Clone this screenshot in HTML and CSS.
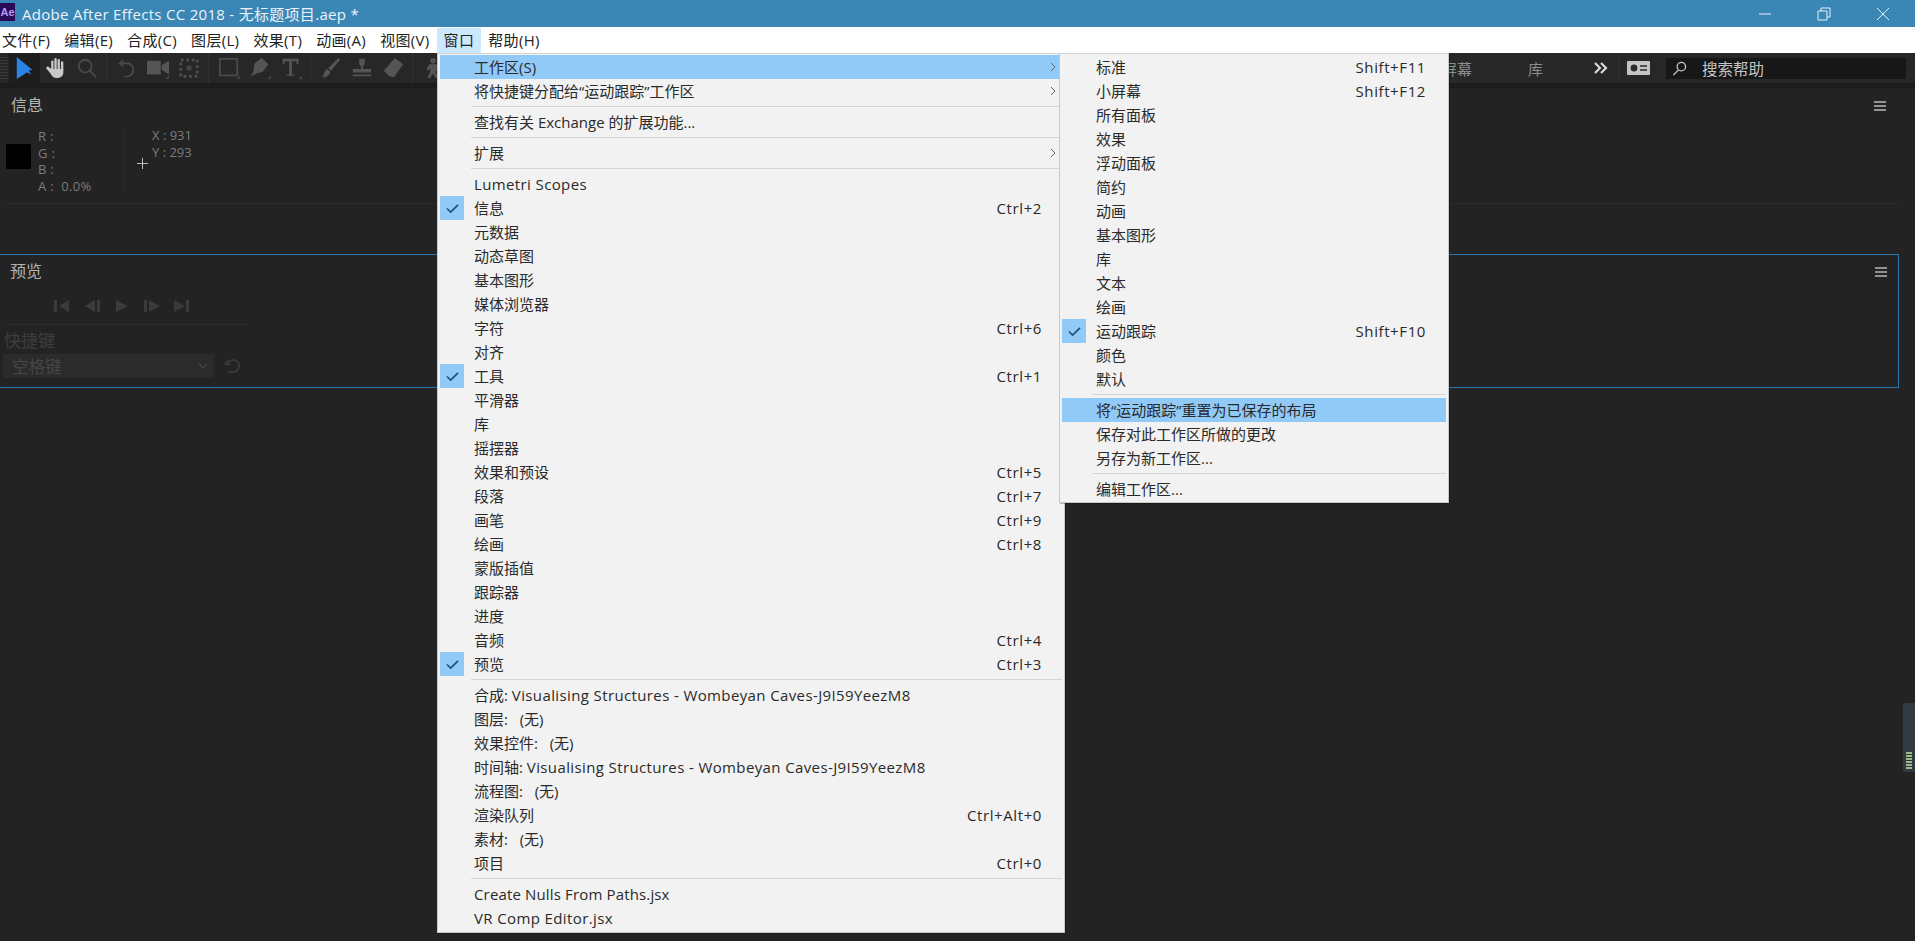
FILE: index.html
```html
<!DOCTYPE html>
<html lang="zh-CN">
<head>
<meta charset="utf-8">
<title>Adobe After Effects CC 2018</title>
<link rel="stylesheet" href="styles.css">
</head>
<body>
<header class="titlebar">
  <span class="ae-logo">Ae</span>
  <span class="title-text">Adobe After Effects CC 2018 - 无标题项目.aep *</span>
  <div class="win-controls">
    <svg class="win-btn" viewBox="0 0 16 16"><path d="M2 8h12"/></svg>
    <svg class="win-btn" viewBox="0 0 16 16"><path d="M2 5h9v9H2zM5 5V2h9v9h-3"/></svg>
    <svg class="win-btn" viewBox="0 0 16 16"><path d="M2 2l12 12M14 2L2 14"/></svg>
  </div>
</header>
<nav class="menubar">
  <span class="mb-item mb-first">文件(F)</span>
  <span class="mb-item">编辑(E)</span>
  <span class="mb-item">合成(C)</span>
  <span class="mb-item">图层(L)</span>
  <span class="mb-item">效果(T)</span>
  <span class="mb-item">动画(A)</span>
  <span class="mb-item">视图(V)</span>
  <span class="mb-item mb-open">窗口</span>
  <span class="mb-item">帮助(H)</span>
</nav>
<div class="toolbar">
  <div class="grip"></div>
  <span class="tool tool-active"><svg viewBox="0 0 24 24" class="ico"><path class="f-blue" d="M3 0l17 14-4 1 3 4-5-2-11 7z"/></svg></span>
  <span class="tool"><svg viewBox="0 0 24 24" class="ico"><path class="f-light" d="M7 13h13v4c0 3-2 6-7 6-4 0-5-2-7-5l-5-6 2-2 4 3z"/><path class="s-light" d="M8 14V5M11.5 13V2.5M15 13V3.5M18.7 14V6"/></svg></span>
  <span class="tool"><svg viewBox="0 0 24 24" class="ico"><circle class="s-dim" cx="10" cy="10" r="7"/><path class="s-dim" d="M15 15l7 7"/></svg></span>
  <i class="tsep"></i>
  <span class="tool"><svg viewBox="0 0 24 24" class="ico"><path class="s-dim" d="M5 7h9a7 7 0 1 1-5 14"/><path class="f-dim" d="M2 7l6-5v10z"/></svg></span>
  <span class="tool"><svg viewBox="0 0 24 24" class="ico"><path class="f-mid" d="M0 4h15v15H0zM16 9l8-5v15l-8-5z"/><path class="f-dim" d="M24 24h-4l4-4z"/></svg></span>
  <span class="tool"><svg viewBox="0 0 24 24" class="ico"><path class="s-dots" d="M3 3h18v18H3z"/><circle class="f-dim" cx="12" cy="12" r="3"/></svg></span>
  <i class="tsep"></i>
  <span class="tool"><svg viewBox="0 0 24 24" class="ico"><path class="s-dim" d="M2 2h19v18H2z"/><path class="f-dim" d="M24 24h-4l4-4z"/></svg></span>
  <span class="tool"><svg viewBox="0 0 24 24" class="ico"><path class="f-mid" d="M14 1l7 7-6 8-7 2-6 3 3-6 1-8z"/><path class="f-dim" d="M24 24h-4l4-4z"/></svg></span>
  <span class="tool"><svg viewBox="0 0 24 24" class="ico"><path class="f-mid" d="M3 2h17v6h-1.500l-1-3.500H13V19h3v1.500H7V19h3V4.500H5.500L4.500 8H3z"/><path class="f-dim" d="M24 24h-4l4-4z"/></svg></span>
  <i class="tsep"></i>
  <span class="tool"><svg viewBox="0 0 24 24" class="ico"><path class="f-mid" d="M20 1l2 2-10 12-3-3zM8 13l3 3c0 4-4 6-9 6 3-2 2-8 6-9z"/></svg></span>
  <span class="tool"><svg viewBox="0 0 24 24" class="ico"><path class="f-mid" d="M9 2h6v6l-2 2v3h9v4H2v-4h9v-3L9 8zM2 19h20v2H2z"/></svg></span>
  <span class="tool"><svg viewBox="0 0 24 24" class="ico"><path class="f-mid" d="M14 1l9 7-10 14-5-1-6-6z"/></svg></span>
  <i class="tsep"></i>
  <span class="tool"><svg viewBox="0 0 24 24" class="ico"><circle class="f-mid" cx="12" cy="4" r="3"/><path class="f-mid" d="M8 8h8l3 7-3 1-1-3v4l3 6h-3l-3-5-3 5H6l3-7v-4l-2 3-2-2z"/></svg></span>
  <div class="tool-right">
    <span class="ws">小屏幕</span>
    <span class="ws">库</span>
    <svg class="more" viewBox="0 0 14 12"><path d="M1 1l5 5-5 5M7 1l5 5-5 5"/></svg>
    <i class="tsep tsep-r"></i>
    <svg class="sync" viewBox="0 0 23 14"><rect width="23" height="14" rx="1"/><circle cx="7" cy="7" r="3.400"/><path d="M13 5h7M13 9h7"/></svg>
    <div class="search">
      <svg class="search-ico" viewBox="0 0 16 16"><circle cx="10" cy="6" r="4.500"/><path d="M7 9.500L1.500 15"/></svg>
      <span>搜索帮助</span>
    </div>
  </div>
</div>

<main class="work">
  <section class="panel-info">
    <div class="panel-head">
      <span class="panel-title">信息</span>
      <svg class="burger" viewBox="0 0 12 10"><path d="M0 1h12M0 5h12M0 9h12"/></svg>
    </div>
    <div class="info-body">
      <div class="swatch"></div>
      <div class="rgba">
        <div>R :</div>
        <div>G :</div>
        <div>B :</div>
        <div>A :&nbsp; 0.0%</div>
      </div>
      <i class="info-vline"></i>
      <svg class="plus" viewBox="0 0 12 12"><path d="M6 0v12M0 6h12"/></svg>
      <div class="xy">
        <div>X : 931</div>
        <div>Y : 293</div>
      </div>
    </div>
    <div class="info-rule"></div>
  </section>
  <section class="panel-preview">
    <div class="panel-head preview-head">
      <span class="panel-title">预览</span>
      <svg class="burger" viewBox="0 0 12 10"><path d="M0 1h12M0 5h12M0 9h12"/></svg>
    </div>
    <div class="transport">
      <svg viewBox="0 0 16 14"><path d="M0 1h3v12H0zM15 1v12L5 7z"/></svg>
      <svg viewBox="0 0 16 14"><path d="M11 1v12L1 7zM13 1h3v12h-3z"/></svg>
      <svg viewBox="0 0 16 14"><path d="M2 1l12 6-12 6z"/></svg>
      <svg viewBox="0 0 16 14"><path d="M0 1h3v12H0zM5 1l11 6-11 6z"/></svg>
      <svg viewBox="0 0 16 14"><path d="M0 1l11 6-11 6zM12 1h3v12h-3z"/></svg>
    </div>
    <div class="preview-rule"></div>
    <div class="shortcut-label">快捷键</div>
    <div class="shortcut-row">
      <div class="select">
        <span>空格键</span>
        <svg viewBox="0 0 10 6"><path d="M1 1l4 4 4-4"/></svg>
      </div>
      <svg class="reset" viewBox="0 0 18 16"><path d="M3 8a6 6 0 1 1 6 6H4"/><path class="reset-fill" d="M0 7h7L3 2z"/></svg>
    </div>
  </section>
  <div class="meter"><div class="meter-bars"></div></div>
</main>

<div class="menu menu-window">
  <div class="mi mi-hot"><span class="cell"></span><span>工作区(S)</span><svg class="chev" viewBox="0 0 6 10"><path d="M1 1l4 4-4 4"/></svg></div>
  <div class="mi"><span class="cell"></span><span>将快捷键分配给“运动跟踪”工作区</span><svg class="chev" viewBox="0 0 6 10"><path d="M1 1l4 4-4 4"/></svg></div>
  <div class="msep"></div>
  <div class="mi"><span class="cell"></span><span>查找有关 Exchange 的扩展功能...</span></div>
  <div class="msep"></div>
  <div class="mi"><span class="cell"></span><span>扩展</span><svg class="chev" viewBox="0 0 6 10"><path d="M1 1l4 4-4 4"/></svg></div>
  <div class="msep"></div>
  <div class="mi"><span class="cell"></span><span class="lat">Lumetri Scopes</span></div>
  <div class="mi"><span class="cell cell-on"><svg viewBox="0 0 14 12"><path d="M1 6l4 4 8-8"/></svg></span><span>信息</span><span class="key">Ctrl+2</span></div>
  <div class="mi"><span class="cell"></span><span>元数据</span></div>
  <div class="mi"><span class="cell"></span><span>动态草图</span></div>
  <div class="mi"><span class="cell"></span><span>基本图形</span></div>
  <div class="mi"><span class="cell"></span><span>媒体浏览器</span></div>
  <div class="mi"><span class="cell"></span><span>字符</span><span class="key">Ctrl+6</span></div>
  <div class="mi"><span class="cell"></span><span>对齐</span></div>
  <div class="mi"><span class="cell cell-on"><svg viewBox="0 0 14 12"><path d="M1 6l4 4 8-8"/></svg></span><span>工具</span><span class="key">Ctrl+1</span></div>
  <div class="mi"><span class="cell"></span><span>平滑器</span></div>
  <div class="mi"><span class="cell"></span><span>库</span></div>
  <div class="mi"><span class="cell"></span><span>摇摆器</span></div>
  <div class="mi"><span class="cell"></span><span>效果和预设</span><span class="key">Ctrl+5</span></div>
  <div class="mi"><span class="cell"></span><span>段落</span><span class="key">Ctrl+7</span></div>
  <div class="mi"><span class="cell"></span><span>画笔</span><span class="key">Ctrl+9</span></div>
  <div class="mi"><span class="cell"></span><span>绘画</span><span class="key">Ctrl+8</span></div>
  <div class="mi"><span class="cell"></span><span>蒙版插值</span></div>
  <div class="mi"><span class="cell"></span><span>跟踪器</span></div>
  <div class="mi"><span class="cell"></span><span>进度</span></div>
  <div class="mi"><span class="cell"></span><span>音频</span><span class="key">Ctrl+4</span></div>
  <div class="mi"><span class="cell cell-on"><svg viewBox="0 0 14 12"><path d="M1 6l4 4 8-8"/></svg></span><span>预览</span><span class="key">Ctrl+3</span></div>
  <div class="msep"></div>
  <div class="mi"><span class="cell"></span><span>合成: <span class="lat">Visualising Structures - Wombeyan Caves-J9I59YeezM8</span></span></div>
  <div class="mi"><span class="cell"></span><span>图层:&nbsp;&nbsp;&nbsp;(无)</span></div>
  <div class="mi"><span class="cell"></span><span>效果控件:&nbsp;&nbsp;&nbsp;(无)</span></div>
  <div class="mi"><span class="cell"></span><span>时间轴: <span class="lat">Visualising Structures - Wombeyan Caves-J9I59YeezM8</span></span></div>
  <div class="mi"><span class="cell"></span><span>流程图:&nbsp;&nbsp;&nbsp;(无)</span></div>
  <div class="mi"><span class="cell"></span><span>渲染队列</span><span class="key">Ctrl+Alt+0</span></div>
  <div class="mi"><span class="cell"></span><span>素材:&nbsp;&nbsp;&nbsp;(无)</span></div>
  <div class="mi"><span class="cell"></span><span>项目</span><span class="key">Ctrl+0</span></div>
  <div class="msep"></div>
  <div class="mi"><span class="cell"></span><span class="lat-tight">Create Nulls From Paths.jsx</span></div>
  <div class="mi"><span class="cell"></span><span class="lat">VR Comp Editor.jsx</span></div>
</div>

<div class="menu menu-sub">
  <div class="mi"><span class="cell"></span><span>标准</span><span class="key">Shift+F11</span></div>
  <div class="mi"><span class="cell"></span><span>小屏幕</span><span class="key">Shift+F12</span></div>
  <div class="mi"><span class="cell"></span><span>所有面板</span></div>
  <div class="mi"><span class="cell"></span><span>效果</span></div>
  <div class="mi"><span class="cell"></span><span>浮动面板</span></div>
  <div class="mi"><span class="cell"></span><span>简约</span></div>
  <div class="mi"><span class="cell"></span><span>动画</span></div>
  <div class="mi"><span class="cell"></span><span>基本图形</span></div>
  <div class="mi"><span class="cell"></span><span>库</span></div>
  <div class="mi"><span class="cell"></span><span>文本</span></div>
  <div class="mi"><span class="cell"></span><span>绘画</span></div>
  <div class="mi"><span class="cell cell-on"><svg viewBox="0 0 14 12"><path d="M1 6l4 4 8-8"/></svg></span><span>运动跟踪</span><span class="key">Shift+F10</span></div>
  <div class="mi"><span class="cell"></span><span>颜色</span></div>
  <div class="mi"><span class="cell"></span><span>默认</span></div>
  <div class="msep"></div>
  <div class="mi mi-hot"><span class="cell"></span><span>将“运动跟踪”重置为已保存的布局</span></div>
  <div class="mi"><span class="cell"></span><span>保存对此工作区所做的更改</span></div>
  <div class="mi"><span class="cell"></span><span>另存为新工作区...</span></div>
  <div class="msep"></div>
  <div class="mi"><span class="cell"></span><span>编辑工作区...</span></div>
</div>
</body>
</html>
```
FILE: styles.css
```css
* { box-sizing: border-box; }
html, body { margin: 0; height: 941px; overflow: hidden; }
body {
  width: 1915px;
  display: flex;
  flex-direction: column;
  background: #232323;
  font-family: "Open Sans", "Noto Sans CJK SC", sans-serif;
  position: relative;
}

/* title bar */
.titlebar {
  height: 27px;
  flex: none;
  background: #3a87b6;
  display: flex;
  align-items: center;
  color: #eaf3f9;
  font-size: 15px;
}
.ae-logo {
  width: 15px;
  height: 18px;
  margin-top: -4px;
  background: #2a0b55;
  color: #b79cff;
  font: 700 11px/18px "Liberation Sans", sans-serif;
  text-align: center;
}
.title-text { margin-left: 7px; white-space: nowrap; letter-spacing: .3px; }
.win-controls {
  margin-left: auto;
  display: flex;
  gap: 43px;
  padding-right: 24px;
}
.win-btn { width: 16px; height: 16px; fill: none; stroke: #e6f0f7; stroke-width: 1; }

/* menu bar */
.menubar {
  height: 26px;
  flex: none;
  background: #fff;
  display: flex;
  align-items: center;
  font-size: 15px;
  letter-spacing: .33px;
  color: #222;
}
.mb-item { padding: 0 7px; height: 25px; line-height: 24px; white-space: nowrap; }
.mb-first { margin-left: -5px; }
.mb-open { background: #cce8ff; }

/* toolbar */
.toolbar {
  height: 35px;
  flex: none;
  background: #272727;
  border-bottom: 5px solid #1c1c1c;
  display: flex;
  align-items: center;
}
.grip {
  width: 8px;
  height: 22px;
  background: repeating-linear-gradient(#3a3a3a 0 1px, transparent 1px 3px);
}
.tool { width: 31px; height: 30px; display: flex; align-items: center; justify-content: center; flex: none; }
.tool-active { background: #1d1d1d; margin-left: 1px; }
.ico { width: 22px; height: 22px; }
.f-blue { fill: #2c83e6; }
.f-light { fill: #c8c8c8; }
.s-light { fill: none; stroke: #c8c8c8; stroke-width: 2.6; stroke-linecap: round; }
.f-mid { fill: #555; }
.f-dim { fill: #444; }
.s-dim { fill: none; stroke: #4a4a4a; stroke-width: 2; }
.s-dots { fill: none; stroke: #4f4f4f; stroke-width: 3; stroke-dasharray: 3 3; }
.tsep { width: 1px; height: 30px; background: #323232; margin: 0 4px; flex: none; font-style: normal; }
.tool-right { margin-left: auto; display: flex; align-items: center; height: 30px; padding-right: 9px; }
.ws { color: #8c8c8c; font-size: 15px; white-space: nowrap; }
.ws + .ws { margin-left: 56px; }
.more { width: 14px; height: 12px; margin-left: 51px; fill: none; stroke: #d8d8d8; stroke-width: 2.2; }
.tsep-r { margin: 0 8px 0 10px; }
.sync { width: 23px; height: 14px; }
.sync rect { fill: #c4c4c4; }
.sync circle { fill: #2a2a2a; }
.sync path { stroke: #2a2a2a; stroke-width: 1.6; }
.search {
  width: 240px;
  height: 21px;
  margin-left: 16px;
  background: #171717;
  display: flex;
  align-items: center;
  color: #c4c4c4;
  font-size: 15.5px;
}
.search-ico { width: 15px; height: 15px; margin: 0 15px 0 6px; fill: none; stroke: #c8c8c8; stroke-width: 1.4; }

/* panels */
.work { flex: 1; position: relative; }
.panel-info { height: 166px; }
.panel-head {
  height: 36px;
  padding: 0 29px 0 11px;
  display: flex;
  align-items: center;
  justify-content: space-between;
}
.panel-title { font-size: 16px; color: #b4b4b4; margin-top: -4px; }
.burger { width: 12px; height: 10px; fill: none; stroke: #b8b8b8; stroke-width: 1.3; }
.info-body { height: 76px; display: flex; align-items: flex-start; margin-top: 3px; font-size: 13px; line-height: 16.5px; color: #7c7c7c; }
.swatch { width: 25px; height: 25px; margin: 17px 0 0 6px; background: #000; border-radius: 1px; }
.rgba { width: 85px; margin-left: 7px; margin-top: 1px; white-space: nowrap; letter-spacing: .3px; }
.info-vline { width: 1px; height: 60px; margin-top: 3px; background: #2b2b2b; }
.plus { width: 11px; height: 11px; margin: 31px 0 0 13px; fill: none; stroke: #c8c8c8; stroke-width: 1; }
.xy { margin-left: 4px; }
.info-rule { height: 1px; margin: 0 15px 0 5px; background: #2c2c2c; }

.panel-preview { height: 134px; width: 1899px; border: 1px solid #2d76ad; border-left: 0; }
.preview-head { height: 34px; padding-left: 10px; padding-right: 11px; }
.transport { display: flex; gap: 14px; height: 16px; margin: 10px 0 0 54px; }
.transport svg { width: 16px; height: 14px; fill: #3b3b3b; }
.preview-rule { height: 1px; width: 243px; margin: 9px 0 0 5px; background: #2c2c2c; }
.shortcut-label { margin: 5px 0 0 4px; font-size: 17px; line-height: 22px; color: #3e3e3e; }
.shortcut-row { display: flex; align-items: center; margin: 2px 0 0 3px; }
.select {
  width: 211px;
  height: 24px;
  background: #2b2b2b;
  padding: 0 6px 0 9px;
  display: flex;
  align-items: center;
  justify-content: space-between;
  font-size: 16.5px;
  color: #464646;
}
.select svg { width: 10px; height: 6px; fill: none; stroke: #444; stroke-width: 1.3; }
.reset { width: 18px; height: 16px; margin-left: 10px; fill: none; stroke: #383838; stroke-width: 2; }
.reset-fill { fill: #383838; stroke: none; }
.meter { position: absolute; right: 0; top: 615px; width: 12px; height: 69px; background: #333b42; border-radius: 3px 0 0 3px; display: flex; align-items: flex-end; justify-content: center; padding-bottom: 2px; }
.meter-bars { width: 6px; height: 18px; background: repeating-linear-gradient(#9fb98a 0 2px, #2c3a3d 2px 3px); }

/* popup menus */
.menu {
  position: absolute;
  top: 53px;
  background: #f2f2f2;
  border: 1px solid #c8c8c8;
  border-top-color: #d5d5d5;
  color: #2a2a2a;
  font-size: 15px;
  padding: 1px 2px 2px;
  box-shadow: 1px 1px 0 rgba(0,0,0,.25);
}
.menu-window { left: 437px; width: 628px; height: 880px; }
.menu-sub { left: 1059px; width: 390px; height: 450px; }
.mi { height: 24px; display: flex; align-items: center; white-space: nowrap; line-height: 24px; }
.mi-hot { background: #91c9f7; }
.cell { width: 24px; height: 24px; flex: none; margin-right: 10px; display: flex; align-items: center; justify-content: center; }
.cell-on { background: #91c9f7; }
.cell svg { width: 13px; height: 11px; fill: none; stroke: #1f4e79; stroke-width: 1.8; }
.lat { letter-spacing: .38px; }
.lat-tight { letter-spacing: .15px; }
.key { margin-left: auto; padding-right: 20px; letter-spacing: .6px; }
.chev { width: 6px; height: 10px; margin-left: auto; margin-right: 6px; fill: none; stroke: #666; stroke-width: 1; }
.msep { height: 7px; padding-top: 3px; margin-left: 31px; }
.msep::before { content: ""; display: block; height: 1px; background: #d4d4d4; }
```
